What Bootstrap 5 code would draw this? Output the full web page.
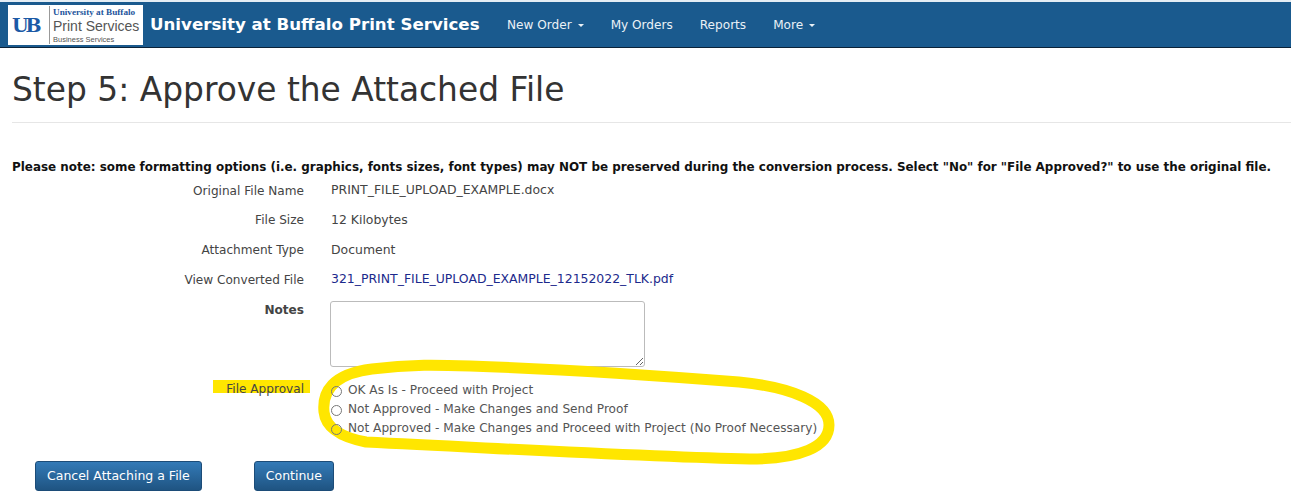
<!DOCTYPE html>
<html lang="en">
<head>
  <meta charset="UTF-8" />
  <title>Step 5: Approve the Attached File</title>
  <meta name="viewport" content="width=device-width, initial-scale=1.0"/>
  <link href="https://cdn.jsdelivr.net/npm/bootstrap@5.3.0/dist/css/bootstrap.min.css" rel="stylesheet" />
  <style>
    body {
      background: #fff;
      color: #444;
      font-family: "DejaVu Sans", Verdana, sans-serif;
      font-size: 12.45px;
      position: relative;
      overflow: hidden;
      height: 504px;
    }
    .ub-bar {
      background: #1a5a8e;
      height: 48px;
      border-top: 2px solid #e4edf4;
      border-bottom: 1px solid #0b2238;
      padding: 0 0 0 8px;
      flex-wrap: nowrap;
      justify-content: flex-start;
    }
    .ub-logo {
      width: 135px;
      height: 40px;
      background: #fff;
      margin-top: 1px;
      padding: 0 0 0 4px;
      color: #555;
      font-family: "Liberation Sans", Arial, sans-serif;
    }
    .ub-mark {
      width: 32px;
      font-family: "DejaVu Serif", serif;
      font-weight: 700;
      font-size: 19px;
      letter-spacing: -3px;
      color: #1c5aa6;
      line-height: 1;
    }
    .ub-words {
      border-left: 1px solid #999;
      margin-left: 5px;
      padding-left: 3px;
      height: 38px;
      white-space: nowrap;
    }
    .ub-top { font: 700 9.2px/11px "Liberation Serif", serif; color: #24559c; padding-top: 1px; }
    .ub-main { font-size: 14px; line-height: 17px; }
    .ub-sub { font-size: 7.5px; line-height: 9px; }
    .ub-brand {
      color: #fff;
      font-size: 16.65px;
      font-weight: 700;
      margin: 2px 0 0 7px;
      padding: 0;
    }
    .ub-links { margin: 1px 0 0 14px; gap: 0; }
    .ub-links .nav-link {
      color: #eaf1f6;
      font-size: 12.1px;
      padding: 0 13.5px;
      white-space: nowrap;
    }
    .ub-links .dropdown-toggle::after { margin-left: 6px; vertical-align: 2px; }
    .ub-title {
      font-size: 32.87px;
      font-weight: 400;
      color: #333;
      margin: 0;
      padding: 22px 0 13px 12px;
      line-height: 39px;
    }
    .ub-rule { margin: 0 0 0 12px; border-top: 1px solid #e6e6e6; opacity: 1; }
    .ub-note {
      font-weight: 700;
      color: #111;
      margin: 36px 0 0 12px;
      line-height: 16px;
      white-space: nowrap;
      font-size: 11.93px;
    }
    .ub-row { min-height: 29.6px; align-items: center; gap: 27px; }
    .ub-label { width: 304px; text-align: right; flex: none; margin: 0; color: #444; font-size: 12.1px; }
    .ub-link { color: #1c2a8c; text-decoration: none; }
    .ub-fields { padding-top: 1px; }
    .ub-notes { margin-top: 7px; align-items: flex-start; }
    .ub-notes .ub-label { font-weight: 700; }
    .ub-notes textarea {
      width: 315px;
      height: 66px;
      border: 1px solid #bbb;
      border-radius: 3px;
      padding: 4px;
      margin-left: -1px;
    }
    .ub-approval { margin-top: 14px; align-items: flex-start; }
    .ub-approval .ub-label { position: relative; z-index: 1; line-height: 19px; margin-top: -1px; }
    .ub-choices .form-check {
      min-height: 19px;
      margin: 0;
      padding-left: 17px;
      line-height: 19px;
      position: relative;
      z-index: 1;
      font-size: 12.13px;
    }
    .ub-choices .form-check-input {
      width: 11px;
      height: 11px;
      margin: 5px 0 0 -17.5px;
      border: 1px solid #777;
      background-color: transparent;
    }
    .ub-choices .form-check-label { color: #555; }
    .ub-actions { margin: 23px 0 0 35px; gap: 52px; }
    .ub-btn {
      height: 30px;
      padding: 0 11px;
      font-size: 12.5px;
      color: #fff;
      border: 1px solid #1c4c78;
      border-radius: 3px;
      background: linear-gradient(#337ab7, #1f5482);
      white-space: nowrap;
    }
    .ub-ink { position: absolute; left: 0; top: 0; pointer-events: none; }
  </style>
</head>
<body>
  <nav class="navbar ub-bar">
    <div class="ub-logo d-flex align-items-center">
      <div class="ub-mark">UB</div>
      <div class="ub-words">
        <div class="ub-top">University at Buffalo</div>
        <div class="ub-main">Print Services</div>
        <div class="ub-sub">Business Services</div>
      </div>
    </div>
    <a class="navbar-brand ub-brand" href="#">University at Buffalo Print Services</a>
    <ul class="nav ub-links">
      <li class="nav-item"><a class="nav-link dropdown-toggle" href="#">New Order</a></li>
      <li class="nav-item"><a class="nav-link" href="#">My Orders</a></li>
      <li class="nav-item"><a class="nav-link" href="#">Reports</a></li>
      <li class="nav-item"><a class="nav-link dropdown-toggle" href="#">More</a></li>
    </ul>
  </nav>

  <h1 class="ub-title">Step 5: Approve the Attached File</h1>
  <hr class="ub-rule">
  <p class="ub-note">Please note: some formatting options (i.e. graphics, fonts sizes, font types) may NOT be preserved during the conversion process. Select "No" for "File Approved?" to use the original file.</p>

  <form class="ub-fields">
    <div class="d-flex ub-row"><label class="ub-label">Original File Name</label><div>PRINT_FILE_UPLOAD_EXAMPLE.docx</div></div>
    <div class="d-flex ub-row"><label class="ub-label">File Size</label><div>12 Kilobytes</div></div>
    <div class="d-flex ub-row"><label class="ub-label">Attachment Type</label><div>Document</div></div>
    <div class="d-flex ub-row"><label class="ub-label">View Converted File</label><a class="ub-link" href="#">321_PRINT_FILE_UPLOAD_EXAMPLE_12152022_TLK.pdf</a></div>
    <div class="d-flex ub-row ub-notes"><label class="ub-label" for="notes">Notes</label><textarea id="notes"></textarea></div>
    <div class="d-flex ub-row ub-approval">
      <label class="ub-label">File Approval</label>
      <div class="ub-choices">
        <div class="form-check"><input class="form-check-input" type="radio" name="ok" id="r1"><label class="form-check-label" for="r1">OK As Is - Proceed with Project</label></div>
        <div class="form-check"><input class="form-check-input" type="radio" name="ok" id="r2"><label class="form-check-label" for="r2">Not Approved - Make Changes and Send Proof</label></div>
        <div class="form-check"><input class="form-check-input" type="radio" name="ok" id="r3"><label class="form-check-label" for="r3">Not Approved - Make Changes and Proceed with Project (No Proof Necessary)</label></div>
      </div>
    </div>
    <div class="d-flex ub-actions">
      <button type="button" class="btn ub-btn">Cancel Attaching a File</button>
      <button type="button" class="btn ub-btn">Continue</button>
    </div>
  </form>

  <!-- highlighter marks drawn over the form -->
  <svg class="ub-ink" width="1291" height="504" viewBox="0 0 1291 504" fill="none">
    <rect x="213" y="380" width="97" height="13" fill="#ffe600"/>
    <path d="M324 412 C322 392 332 374 372 369 C410 364 440 365 470 366 C560 369 650 375 739 382 C790 387 829 402 829 425 C829 447 800 459 750 459 C650 457 532 450 366 442 C345 438 326 430 324 412 Z" stroke="#ffe600" stroke-width="11" stroke-linejoin="round"/>
  </svg>

  <script src="https://cdn.jsdelivr.net/npm/bootstrap@5.3.0/dist/js/bootstrap.bundle.min.js"></script>
</body>
</html>
